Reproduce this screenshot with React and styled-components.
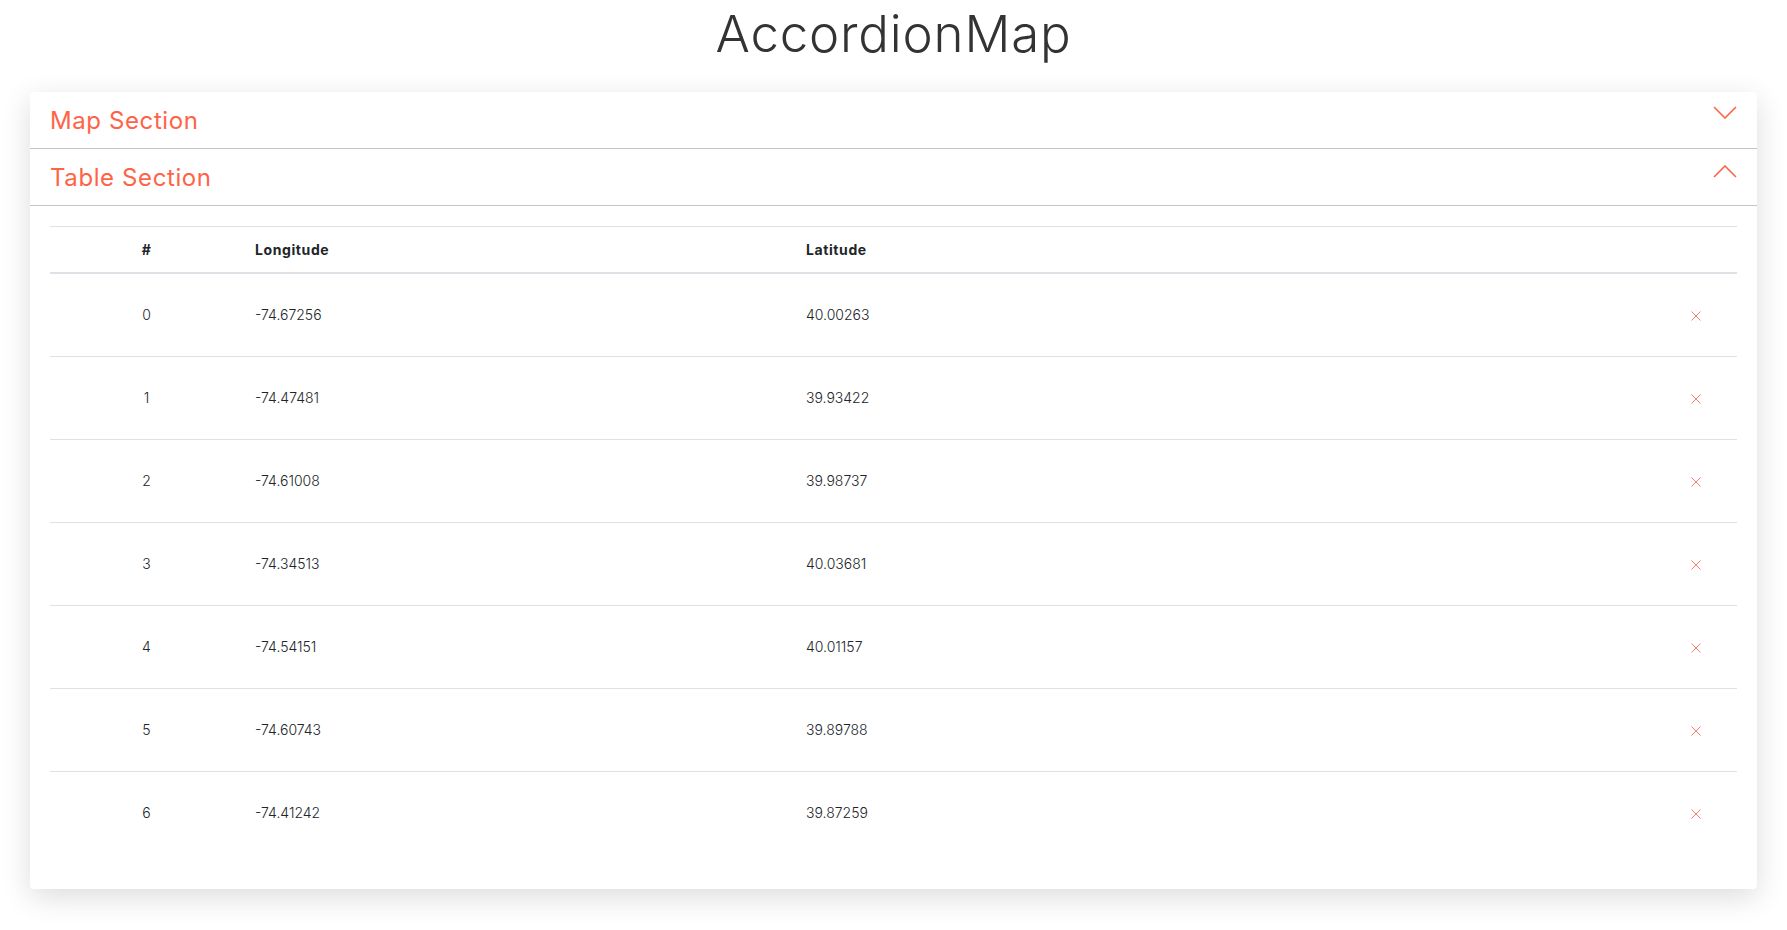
import React from 'react'
import styled, { createGlobalStyle } from 'styled-components'

const GlobalStyle = createGlobalStyle`
    body {
        margin: 0;
        background: #fff;
        font-family: Inter, "Open Sans", "Liberation Sans", sans-serif;
        color: #212529;
    }
`

const Page = styled.div`
    padding: 0 30px 41px;
`

const Title = styled.h1`
    margin: 0 0 24px;
    text-align: center;
    font-size: 51px;
    line-height: 68px;
    font-weight: 300;
    color: #333;
    letter-spacing: 0.8px;
`

const Card = styled.div`
    background: #fff;
    border-radius: 4px;
    box-shadow: 0 8px 30px rgba(0, 0, 0, 0.14);
`

const SectionHeader = styled.div`
    display: flex;
    align-items: center;
    justify-content: space-between;
    height: 56px;
    padding: 0 20px;
    border-bottom: 1px solid #c4c4c4;
    color: tomato;
    font-size: 24px;
    font-weight: 400;
    letter-spacing: 0.6px;
    cursor: pointer;
`

const Chevron = styled.svg`
    width: 24px;
    height: 13px;
    margin-top: ${p => (p.up ? '-12px' : '-16px')};
`

const SectionBody = styled.div`
    padding: 20px 20px 35px;
`

const Table = styled.table`
    width: 100%;
    table-layout: fixed;
    border-collapse: collapse;
    font-size: 14px;
`

const Th = styled.th`
    box-sizing: border-box;
    padding: 12px;
    line-height: 21px;
    text-align: ${p => p.align || 'left'};
    font-weight: 700;
    letter-spacing: 0.6px;
    border-top: 1px solid #dee2e6;
    border-bottom: 2px solid #dee2e6;
    width: ${p => p.w || 'auto'};
`

const Row = styled.tr`
    &:not(:last-child) td {
        border-bottom: 1px solid #dee2e6;
    }
`

const Td = styled.td`
    padding: 31px 12px;
    line-height: 20px;
    font-weight: 300;
    text-align: ${p => p.align || 'left'};
`

const DeleteButton = styled.span`
    display: inline-flex;
    cursor: pointer;
    vertical-align: middle;
`

const points = [
    [-74.67256, '40.00263'],
    [-74.47481, '39.93422'],
    [-74.61008, '39.98737'],
    [-74.34513, '40.03681'],
    [-74.54151, '40.01157'],
    [-74.60743, '39.89788'],
    [-74.41242, '39.87259'],
]

const ChevronIcon = ({ up }) => (
    <Chevron up={up} viewBox="0 0 24 13">
        <polyline
            points={up ? '1,12 12,1 23,12' : '1,1 12,12 23,1'}
            fill="none"
            stroke="tomato"
            strokeWidth="1.6"
        />
    </Chevron>
)

const CrossIcon = () => (
    <svg width="10" height="10" viewBox="0 0 10 10">
        <path d="M0.5 0.5 L9.5 9.5 M9.5 0.5 L0.5 9.5" stroke="#ff7a6b" strokeWidth="1" fill="none" />
    </svg>
)

class App extends React.Component {
    render() {
        return (
            <Page>
                <GlobalStyle />
                <Title>AccordionMap</Title>
                <Card>
                    <SectionHeader>
                        Map Section
                        <ChevronIcon />
                    </SectionHeader>
                    <SectionHeader>
                        Table Section
                        <ChevronIcon up />
                    </SectionHeader>
                    <SectionBody>
                        <Table>
                            <thead>
                                <tr>
                                    <Th align="center" w="193px">#</Th>
                                    <Th w="551px">Longitude</Th>
                                    <Th>Latitude</Th>
                                    <Th w="82px"></Th>
                                </tr>
                            </thead>
                            <tbody>
                                {points.map(([lng, lat], i) => (
                                    <Row key={i}>
                                        <Td align="center">{i}</Td>
                                        <Td>{lng}</Td>
                                        <Td>{lat}</Td>
                                        <Td align="center">
                                            <DeleteButton><CrossIcon /></DeleteButton>
                                        </Td>
                                    </Row>
                                ))}
                            </tbody>
                        </Table>
                    </SectionBody>
                </Card>
            </Page>
        )
    }
}

export default App
